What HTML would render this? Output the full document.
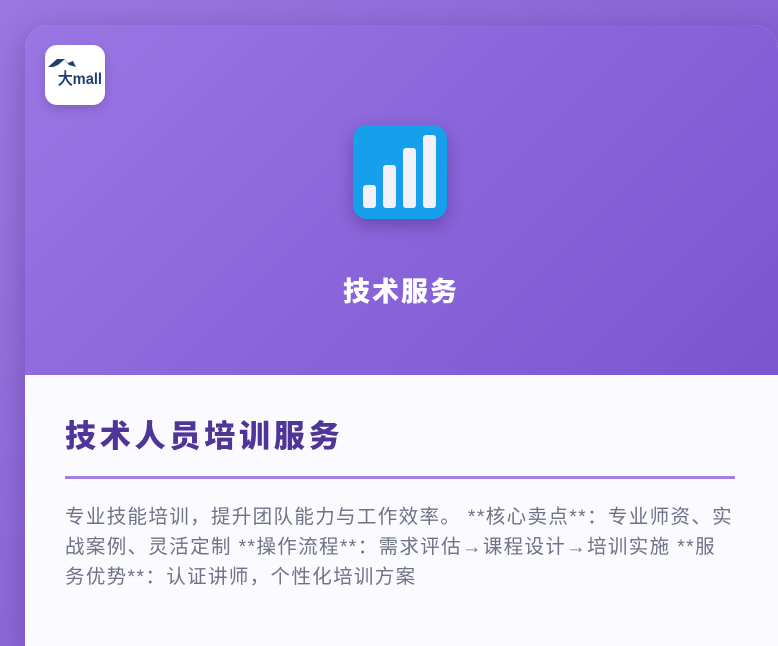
<!DOCTYPE html><html><head><meta charset="utf-8"><style>
html,body{margin:0;width:778px;height:646px;overflow:hidden}
body{position:relative;background:linear-gradient(135deg,#9b78e0,#7b55cc);font-family:"Liberation Sans","Noto Sans CJK SC",sans-serif}
.card{position:absolute;left:25px;top:25px;width:753px;height:621px;border-radius:24px 24px 0 0;overflow:hidden;background:#fbfafe;box-shadow:0 8px 30px rgba(60,30,120,.35)}
.hd{height:350px;background:linear-gradient(135deg,#9a76e4,#7b55d0);position:relative}
.logo{position:absolute;left:20px;top:20px;width:60px;height:60px;background:#fff;border-radius:12px;box-shadow:0 4px 10px rgba(0,0,0,.15)}
.ic{position:absolute;left:328px;top:100px;width:94px;height:94px;border-radius:14px;background:#16a0ec;box-shadow:0 6px 16px rgba(40,20,90,.35)}
.b{position:absolute;bottom:11px;width:13px;background:#f3f0fb;border-radius:3px}
.t{position:absolute;left:0;width:752px;top:245px;text-align:center;color:#fff;font-size:27px;font-weight:900;letter-spacing:2px}
h2{margin:0;position:absolute;left:40px;top:392px;font-size:31px;color:#4e3597;font-weight:900;line-height:40px;letter-spacing:3.8px}
.ln{position:absolute;left:40px;top:451px;width:670px;height:3px;background:#a27ee6}
p{position:absolute;left:40px;top:477px;width:700px;margin:0;font-size:19.5px;line-height:30px;color:#6e7387;letter-spacing:1.35px;white-space:nowrap}
</style></head><body><div class="card"><div class="hd">
<div class="logo"><svg width="60" height="60" viewBox="0 0 60 60"><path d="M3 22 L12 14 L20 14 L13 20 L8 22Z M19 14 L23 18 L28 16 L31 22 L24 20Z" fill="#1e3f73"/><text x="13" y="39" font-size="16" font-weight="bold" fill="#1e3f73" font-family="Liberation Sans" textLength="44" lengthAdjust="spacingAndGlyphs">大mall</text></svg></div>
<div class="ic"><div class="b" style="left:10px;height:23px"></div><div class="b" style="left:30px;height:43px"></div><div class="b" style="left:50px;height:60px"></div><div class="b" style="left:70px;height:73px"></div></div>
<div class="t">技术服务</div></div>
<h2>技术人员培训服务</h2><div class="ln"></div>
<p>专业技能培训，提升团队能力与工作效率。 **核心卖点**：专业师资、实<br>战案例、灵活定制 **操作流程**：需求评估→课程设计→培训实施 **服<br>务优势**：认证讲师，个性化培训方案</p>
</div></body></html>
